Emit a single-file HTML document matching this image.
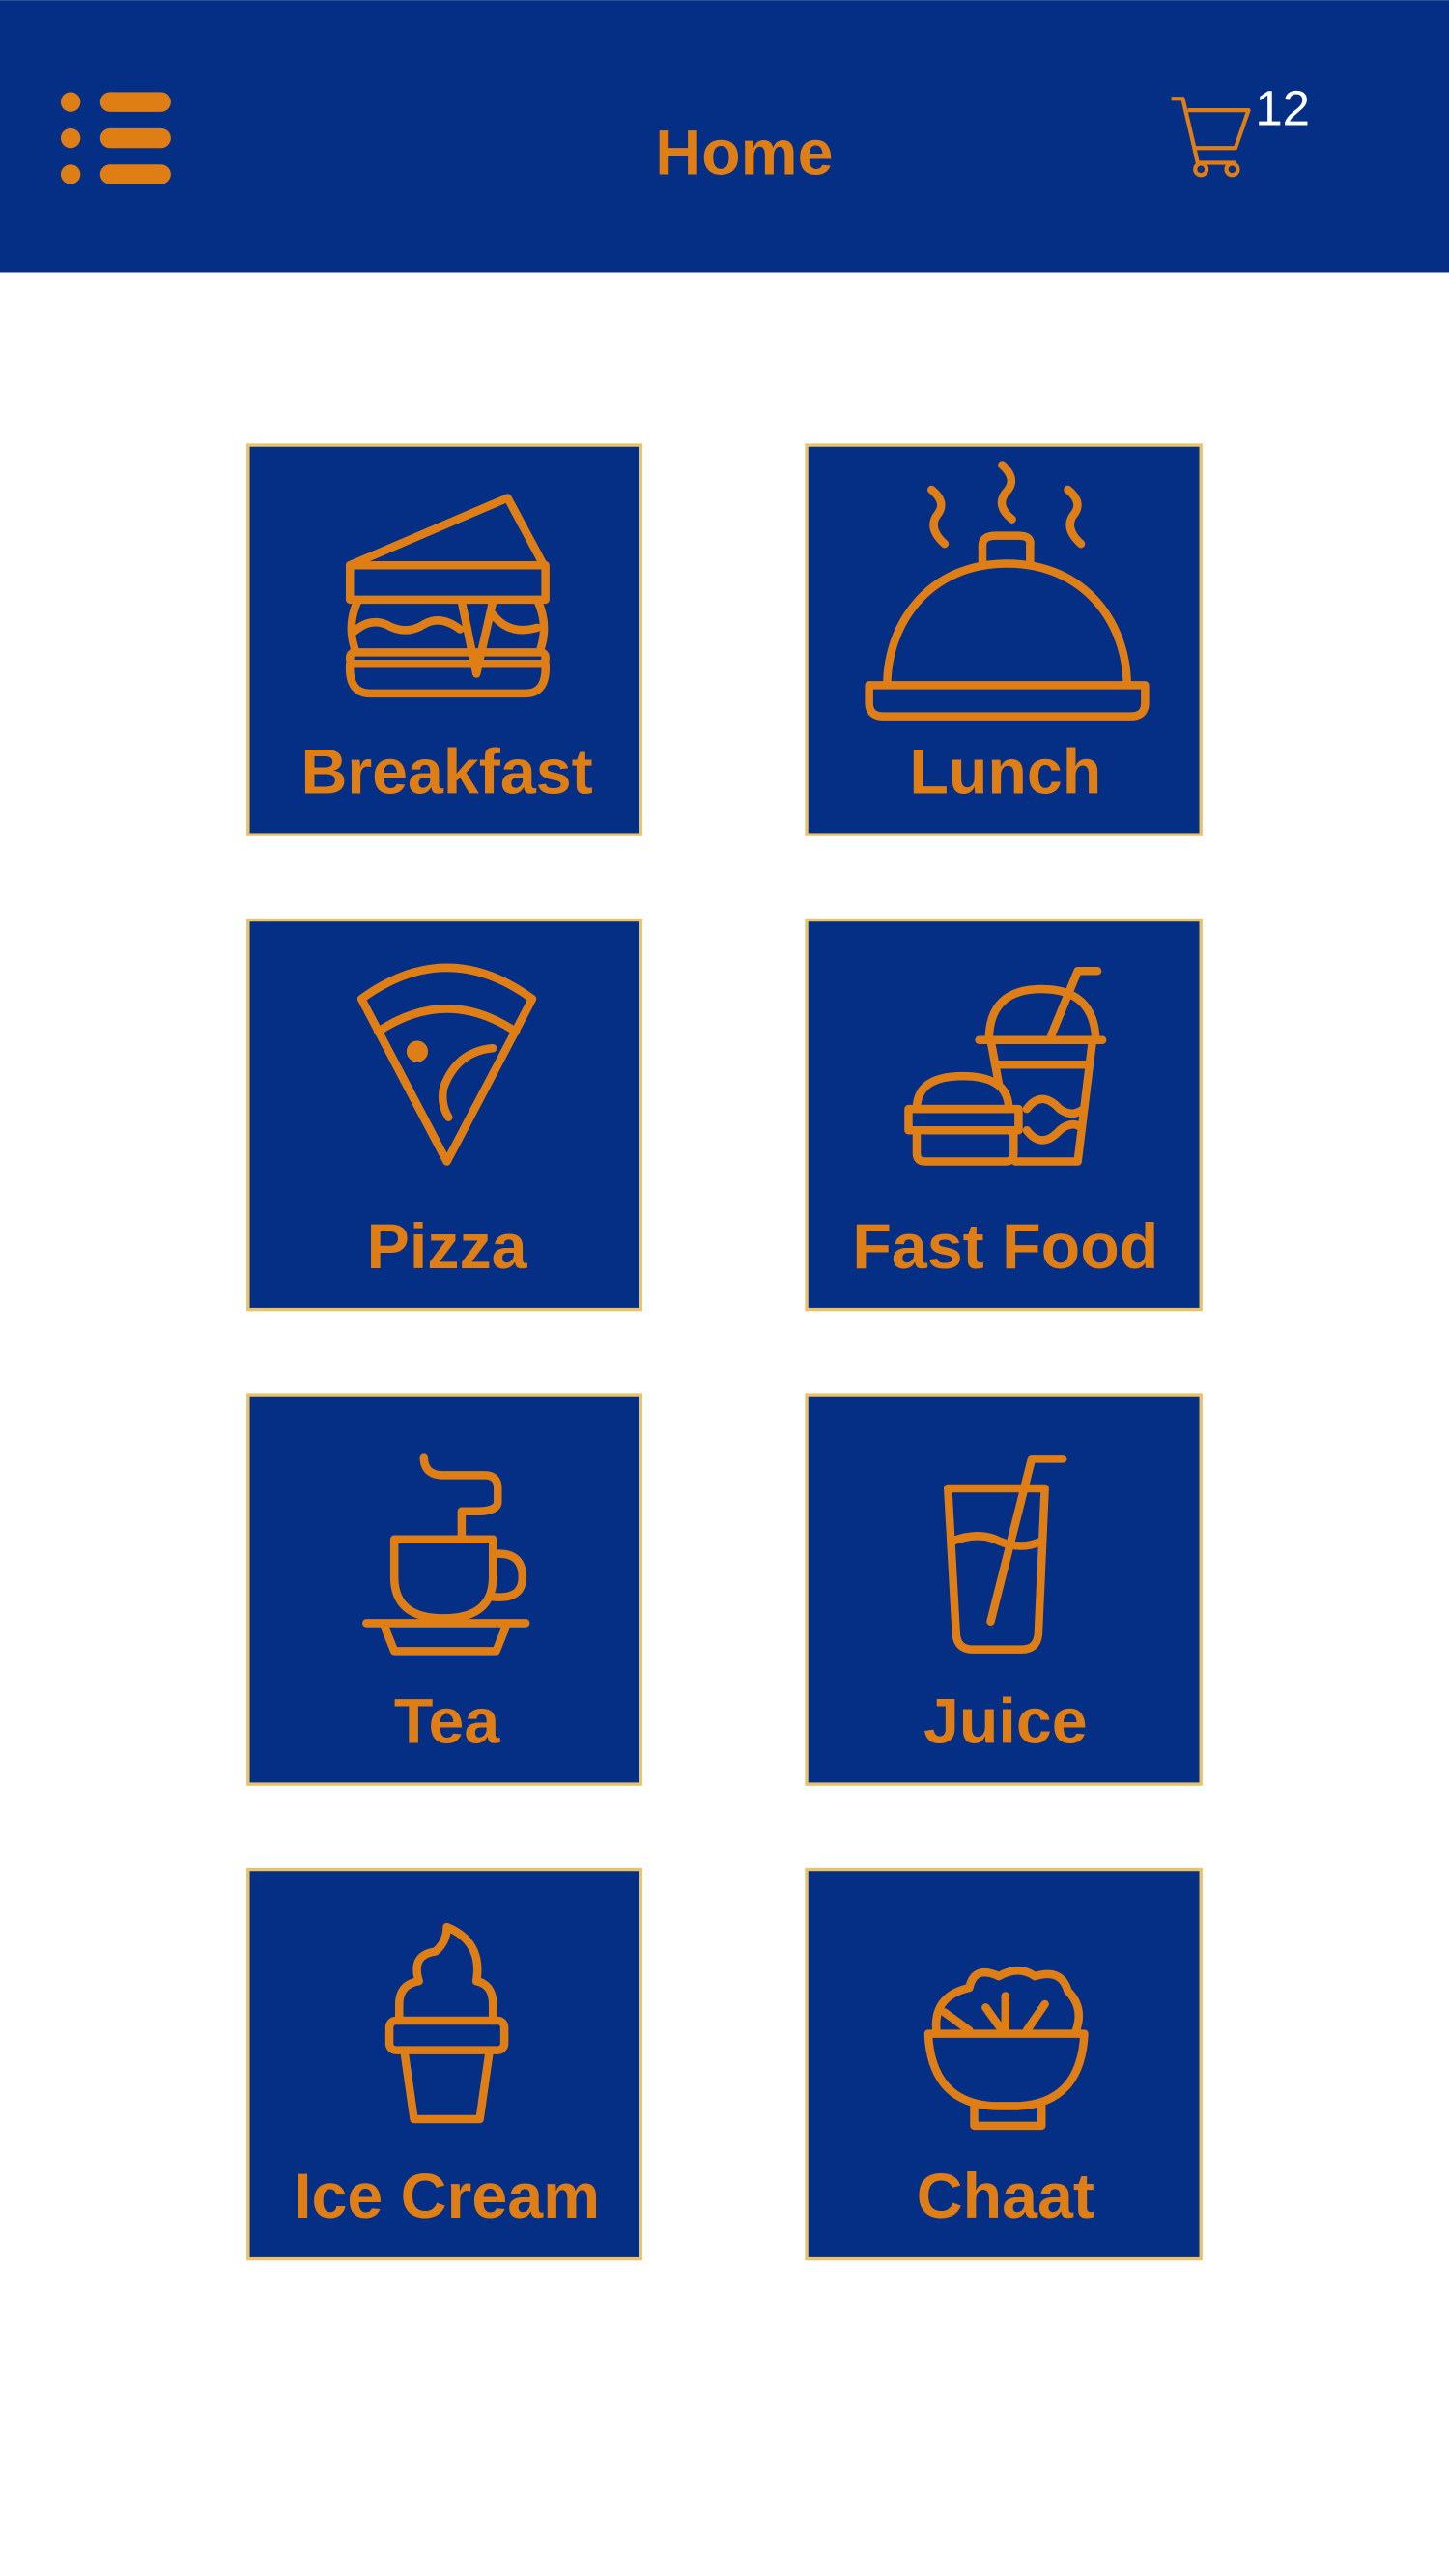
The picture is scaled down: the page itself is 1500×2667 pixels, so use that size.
<!DOCTYPE html>
<html><head><meta charset="utf-8"><style>
html,body{margin:0;padding:0;background:#fff;}
svg{display:block;}
</style></head><body>
<svg width="1500" height="2667" viewBox="0 0 882 1568" xmlns="http://www.w3.org/2000/svg">
<rect x="0" y="0" width="882" height="166" fill="#042f84"/>
<g fill="#e07e16">
<circle cx="43" cy="62" r="6"/><circle cx="43" cy="84" r="6"/><circle cx="43" cy="106" r="6"/>
<rect x="61" y="56" width="43" height="12" rx="6"/><rect x="61" y="78" width="43" height="12" rx="6"/><rect x="61" y="100" width="43" height="12" rx="6"/>
</g>
<text x="453" y="106" text-anchor="middle" font-family="Liberation Sans, sans-serif" font-weight="bold" font-size="39" fill="#e07e16">Home</text>
<g fill="none" stroke="#e07e16" stroke-width="2.5" stroke-linejoin="round">
<path d="M713 60 H720 L727 90 H752 L760 67 H723"/>
<path d="M727 90 L729 99 H752"/>
<circle cx="731" cy="103" r="3.5"/><circle cx="750" cy="103" r="3.5"/>
</g>
<text x="764" y="76" font-family="Liberation Sans, sans-serif" font-size="30" fill="#fff">12</text>

<g fill="#042f84" stroke="#e8c36a" stroke-width="2">
<rect x="151" y="271" width="239" height="237"/><rect x="491" y="271" width="240" height="237"/>
<rect x="151" y="560" width="239" height="237"/><rect x="491" y="560" width="240" height="237"/>
<rect x="151" y="849" width="239" height="237"/><rect x="491" y="849" width="240" height="237"/>
<rect x="151" y="1138" width="239" height="237"/><rect x="491" y="1138" width="240" height="237"/>
</g>
<g font-family="Liberation Sans, sans-serif" font-weight="bold" font-size="39" fill="#e07e16" text-anchor="middle">
<text x="272" y="483">Breakfast</text><text x="612" y="483">Lunch</text>
<text x="272" y="772">Pizza</text><text x="612" y="772">Fast Food</text>
<text x="272" y="1061">Tea</text><text x="612" y="1061">Juice</text>
<text x="272" y="1350">Ice Cream</text><text x="612" y="1350">Chaat</text>
</g>

<g fill="none" stroke="#e07e16" stroke-width="5" stroke-linecap="round" stroke-linejoin="round">
<!-- breakfast -->
<path d="M213 344 L309 303 L331 344 Z"/>
<rect x="213" y="344" width="119" height="21"/>
<path d="M218 365 Q211 380 216 395 M327 365 Q334 380 329 395"/>
<path d="M216 384 Q225 376 235 380 Q247 387 258 380 Q268 374 280 383 M300 374 Q310 387 327 382"/>
<rect x="213" y="397" width="119" height="7" rx="3"/>
<path d="M213 404 Q212 422 225 422 H320 Q333 422 332 404"/>
<path d="M281 366 L290 410 L300 366"/>
<!-- lunch -->
<path d="M567 298 Q577 306 570 314 Q565 322 575 331"/>
<path d="M610 283 Q620 292 612 300 Q606 308 616 316"/>
<path d="M650 298 Q660 306 653 314 Q648 322 658 331"/>
<path d="M598 343 V332 Q598 326 606 326 H620 Q628 326 627 332 V343"/>
<path d="M540 417 C540 380 565 343 613 343 C661 343 686 380 686 417"/>
<path d="M529 417 H697 V428 Q697 436 688 436 H538 Q529 436 529 428 Z"/>
<!-- pizza -->
<path d="M220 608 Q272 570 324 608 L272 707 Z"/>
<path d="M230 628 Q272 600 314 628"/>
<circle cx="254" cy="640" r="4" fill="#e07e16"/>
<path d="M300 638 Q278 640 270 662 Q268 672 273 680"/>
<!-- fast food -->
<path d="M602 633 Q602 602 634 602 Q666 602 667 633"/>
<path d="M596 633 H671"/>
<path d="M640 630 L656 591 H668"/>
<path d="M603 633 L608 660 M665 633 L656 707 H618"/>
<path d="M606 648 H662"/>
<path d="M625 675 Q634 663 645 675 Q652 680 658 676 M625 688 Q634 700 645 688 Q652 682 658 686"/>
<path d="M558 675 Q558 655 586 655 Q614 655 614 675 Z"/>
<path d="M553 675 H620 V688 H553 Z"/>
<path d="M558 688 V702 Q558 707 563 707 H612 Q617 707 617 702 V688"/>
<!-- tea -->
<path d="M258 887 Q258 898 270 898 H295 Q303 898 303 906 V914 Q303 920 290 920 H281 V937"/>
<path d="M240 937 H300 V960 Q300 985 270 985 Q240 985 240 960 Z"/>
<path d="M300 946 Q318 944 318 960 Q318 974 300 972"/>
<path d="M223 988 H320"/>
<path d="M234 990 L240 1005 H302 L308 990"/>
<!-- juice -->
<path d="M577 906 H636 L632 995 Q631 1004 622 1004 H592 Q583 1004 582 995 Z"/>
<path d="M580 938 Q596 932 608 938 Q622 944 634 938"/>
<path d="M603 987 L628 888 H647"/>
<!-- ice cream -->
<path d="M246 1248 L252 1290 H292 L298 1248"/>
<rect x="237" y="1230" width="70" height="18" rx="4"/>
<path d="M243 1230 V1220 Q243 1208 255 1206 Q250 1190 265 1188 Q272 1182 272 1173 Q294 1182 290 1206 Q300 1208 300 1220 V1230"/>
<!-- chaat -->
<path d="M565 1238 H660 Q658 1280 620 1282 H605 Q567 1280 565 1238 Z"/>
<path d="M593 1282 V1294 H634 V1282"/>
<path d="M570 1236 Q568 1215 590 1210 Q593 1196 608 1203 Q620 1196 630 1203 Q646 1198 650 1212 Q660 1222 655 1236"/>
<path d="M575 1225 L590 1236 M612 1215 V1236 M636 1220 L625 1236 M600 1222 L610 1236"/>
</g>
</svg>
</body></html>
